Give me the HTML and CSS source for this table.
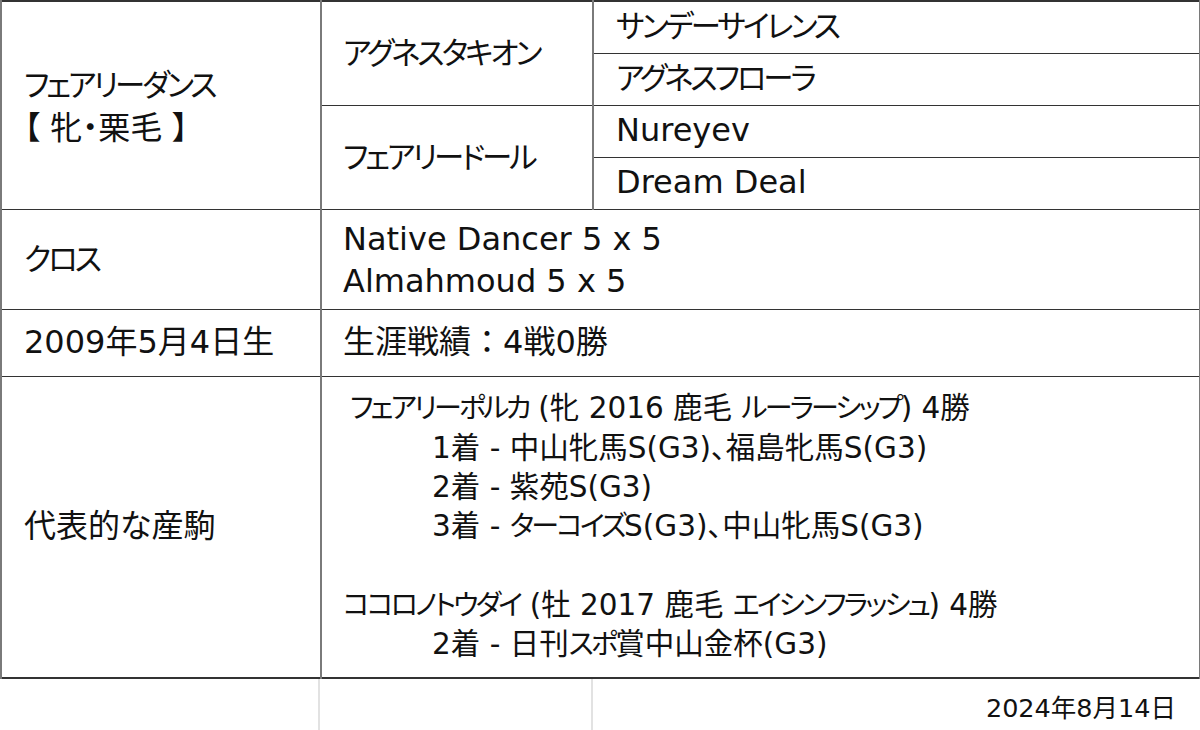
FILE: index.html
```html
<!DOCTYPE html>
<html lang="ja">
<head>
<meta charset="utf-8">
<title>フェアリーダンス</title>
<link rel="stylesheet" href="styles.css">
</head>
<body>
<table class="ped">
  <colgroup><col class="w1"><col class="w2"><col class="w3"></colgroup>
  <tr class="gen">
    <td rowspan="4" class="c1 name"><span class="k">フェアリーダンス</span><br>【 牝・栗毛 】</td>
    <td rowspan="2" class="c2"><span class="k">アグネスタキオン</span></td>
    <td class="c3"><span class="k">サンデーサイレンス</span></td>
  </tr>
  <tr class="gen"><td class="c3"><span class="k">アグネスフローラ</span></td></tr>
  <tr class="gen">
    <td rowspan="2" class="c2"><span class="k">フェアリードール</span></td>
    <td class="c3">Nureyev</td>
  </tr>
  <tr class="gen"><td class="c3">Dream Deal</td></tr>
  <tr class="cross">
    <td class="c1"><span class="k">クロス</span></td>
    <td colspan="2" class="c2 two">Native Dancer 5 x 5<br>Almahmoud 5 x 5</td>
  </tr>
  <tr class="birth">
    <td class="c1">2009年5月4日生</td>
    <td colspan="2" class="c2">生涯戦績<span class="full">：</span>4戦0勝</td>
  </tr>
  <tr class="prog">
    <td class="c1">代表的な産駒</td>
    <td colspan="2" class="c2 list">
      <div class="ln first"><span class="k">フェアリーポルカ</span> (牝 2016 鹿毛 <span class="k">ルーラーシップ</span>) 4勝</div>
      <div class="ln sub">1着 - 中山牝馬S(G3)、福島牝馬S(G3)</div>
      <div class="ln sub">2着 - 紫苑S(G3)</div>
      <div class="ln sub">3着 - <span class="k">ターコイズ</span>S(G3)、中山牝馬S(G3)</div>
      <div class="ln blank"></div>
      <div class="ln"><span class="k">ココロノトウダイ</span> (牡 2017 鹿毛 <span class="k">エイシンフラッシュ</span>) 4勝</div>
      <div class="ln sub">2着 - 日刊<span class="k">スポ</span>賞中山金杯(G3)</div>
    </td>
  </tr>
</table>
<div class="foot">
  <div class="fc"></div>
  <div class="fc"></div>
  <div class="fc date">2024年8月14日</div>
</div>
</body>
</html>
```

FILE: styles.css
```css
html, body {
  margin: 0;
  padding: 0;
  background: #ffffff;
}
body {
  width: 1200px;
  font-family: "DejaVu Sans", "Noto Sans CJK JP", sans-serif;
  font-feature-settings: "palt";
  color: #111;
}
.ped {
  width: 1199px;
  table-layout: fixed;
  border-collapse: collapse;
  border: 2px solid #333;
  font-size: 32px;
}
.w1 { width: 320px; }
.w2 { width: 272px; }
.w3 { width: 607px; }
.ped td {
  border-top: 1px solid #333;
  border-bottom: 1px solid #333;
  border-left: 2px solid #7a7a7a;
  border-right: 2px solid #7a7a7a;
  padding: 0;
  vertical-align: middle;
  white-space: nowrap;
  line-height: 1.3;
}
.k {
  font-size: 0.95em;
  letter-spacing: -0.1em;
}
.full {
  font-feature-settings: normal;
}
.c1 { padding-left: 22px !important; }
.c2 { padding-left: 21px !important; }
.c3 { padding-left: 22px !important; }
.gen td { height: 51px; }
.gen .c3 { padding-bottom: 1px !important; height: 50px; }
.ped td.name { line-height: 43px; padding-top: 2px !important; }
.cross td { height: 99px; }
.ped td.two { line-height: 42px; }
.birth td { height: 66px; }
.prog td { height: 300px; }
.ped td.list { font-size: 29.5px; line-height: 39.3px; }
.ln { height: 39.3px; }
.first { padding-left: 7px; }
.sub { padding-left: 89px; }
.foot {
  display: grid;
  grid-template-columns: 320px 273px 1fr;
  height: 52px;
  border-bottom: 2px solid #e2e2e2;
}
.fc {
  border-right: 2px solid #e2e2e2;
  display: flex;
  align-items: center;
}
.fc:last-child { border-right: none; }
.date {
  justify-content: flex-end;
  padding-right: 24px;
  font-size: 25.5px;
}
```
